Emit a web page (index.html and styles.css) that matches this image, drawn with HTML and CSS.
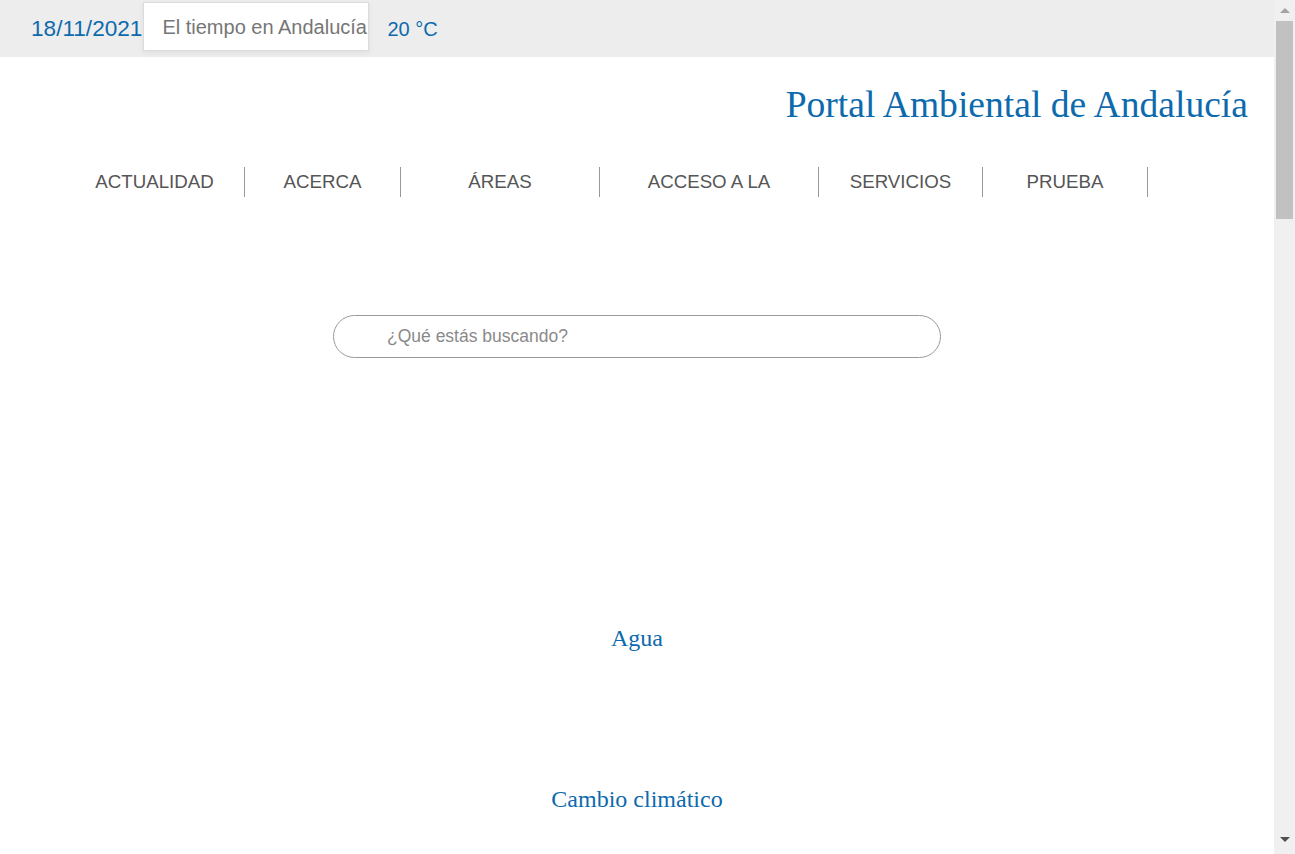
FILE: index.html
```html
<!DOCTYPE html>
<html lang="es">
<head>
<meta charset="utf-8">
<title>Portal Ambiental de Andalucía</title>
<link rel="stylesheet" href="styles.css">
</head>
<body>
<div class="page">
  <div class="topbar">
    <span class="date">18/11/2021</span>
    <div class="weather"><span class="weather-label">El tiempo en Andalucía</span></div>
    <span class="temp">20 °C</span>
  </div>
  <header class="header">
    <h1 class="site-title">Portal Ambiental de Andalucía</h1>
  </header>
  <nav class="mainnav">
    <a class="nav-item w1" href="#">ACTUALIDAD</a>
    <a class="nav-item w2" href="#">ACERCA</a>
    <a class="nav-item w3" href="#">ÁREAS</a>
    <a class="nav-item w4" href="#">ACCESO A LA</a>
    <a class="nav-item w5" href="#">SERVICIOS</a>
    <a class="nav-item w6" href="#">PRUEBA</a>
  </nav>
  <div class="search-wrap">
    <input class="search" type="text" placeholder="¿Qué estás buscando?">
  </div>
  <main class="areas">
    <a class="area-link" href="#">Agua</a>
    <a class="area-link" href="#">Cambio climático</a>
  </main>
</div>
<div class="scrollbar" aria-hidden="true">
  <div class="sb-btn"><span class="arrow-up"></span></div>
  <div class="sb-track"><div class="sb-thumb"></div></div>
  <div class="sb-btn sb-btn-down"><span class="arrow-down"></span></div>
</div>
</body>
</html>
```
FILE: styles.css
```css
html, body {
  height: 100%;
}
body {
  margin: 0;
  font-family: "Liberation Sans", Arial, sans-serif;
  color: #555;
  display: flex;
  overflow: hidden;
  background: #fff;
}
.page {
  flex: 1;
  min-width: 0;
}
.topbar {
  height: 57px;
  background: #ededed;
  display: flex;
  align-items: center;
  padding-left: 31px;
}
.date {
  font-size: 22.6px;
  color: #0d6aad;
  margin-top: 1px;
}
.weather {
  margin-left: 1px;
  margin-bottom: 4px;
  width: 226px;
  height: 49px;
  box-sizing: border-box;
  background: #fff;
  border: 1px solid #dcdcdc;
  box-shadow: 0 2px 6px rgba(0, 0, 0, 0.06);
  display: flex;
  align-items: center;
  padding-left: 18px;
  overflow: hidden;
  white-space: nowrap;
}
.weather-label {
  font-size: 20px;
  color: #767676;
  margin-top: 2px;
}
.temp {
  margin-left: 18px;
  font-size: 20px;
  color: #0d6aad;
  margin-top: 1px;
}
.header {
  display: flex;
  justify-content: flex-end;
  padding: 27px 26px 0 0;
}
.site-title {
  margin: 0;
  font-family: "Liberation Serif", "Times New Roman", serif;
  font-weight: normal;
  font-size: 37.6px;
  line-height: 42px;
  color: #0d6aad;
}
.mainnav {
  display: flex;
  padding-left: 65px;
  margin-top: 41px;
}
.nav-item {
  box-sizing: border-box;
  height: 30px;
  border-right: 1px solid #999;
  display: flex;
  align-items: center;
  justify-content: center;
  font-size: 18.7px;
  color: #555;
  text-decoration: none;
  white-space: nowrap;
}
.w1 { width: 180px; }
.w2 { width: 156px; }
.w3 { width: 199px; }
.w4 { width: 219px; }
.w5 { width: 164px; }
.w6 { width: 165px; }
.search-wrap {
  display: flex;
  justify-content: center;
  margin-top: 118px;
}
.search {
  width: 608px;
  height: 43px;
  box-sizing: border-box;
  border: 1px solid #9a9a9a;
  border-radius: 22px;
  padding: 0 0 0 53px;
  font-family: "Liberation Sans", Arial, sans-serif;
  font-size: 17.5px;
  color: #555;
  outline: none;
}
.search::placeholder {
  color: #8a8a8a;
}
.areas {
  display: flex;
  flex-direction: column;
  align-items: center;
  gap: 133px;
  padding-top: 266px;
}
.area-link {
  font-family: "Liberation Serif", "Times New Roman", serif;
  font-size: 24px;
  line-height: 28px;
  color: #0d6aad;
  text-decoration: none;
}
.scrollbar {
  width: 21px;
  flex: none;
  height: 100vh;
  background: #f0f0f0;
  display: flex;
  flex-direction: column;
}
.sb-btn {
  height: 21px;
  flex: none;
  display: flex;
  align-items: center;
  justify-content: center;
}
.sb-btn-down {
  height: 24px;
  align-items: flex-start;
  padding-top: 7px;
  box-sizing: border-box;
}
.arrow-up {
  width: 0;
  height: 0;
  border-left: 5px solid transparent;
  border-right: 5px solid transparent;
  border-bottom: 5px solid #a3a3a3;
}
.arrow-down {
  width: 0;
  height: 0;
  border-left: 5px solid transparent;
  border-right: 5px solid transparent;
  border-top: 5px solid #505050;
}
.sb-track {
  flex: 1;
  padding: 0 2px;
}
.sb-thumb {
  height: 198px;
  background: #c1c1c1;
}
```
